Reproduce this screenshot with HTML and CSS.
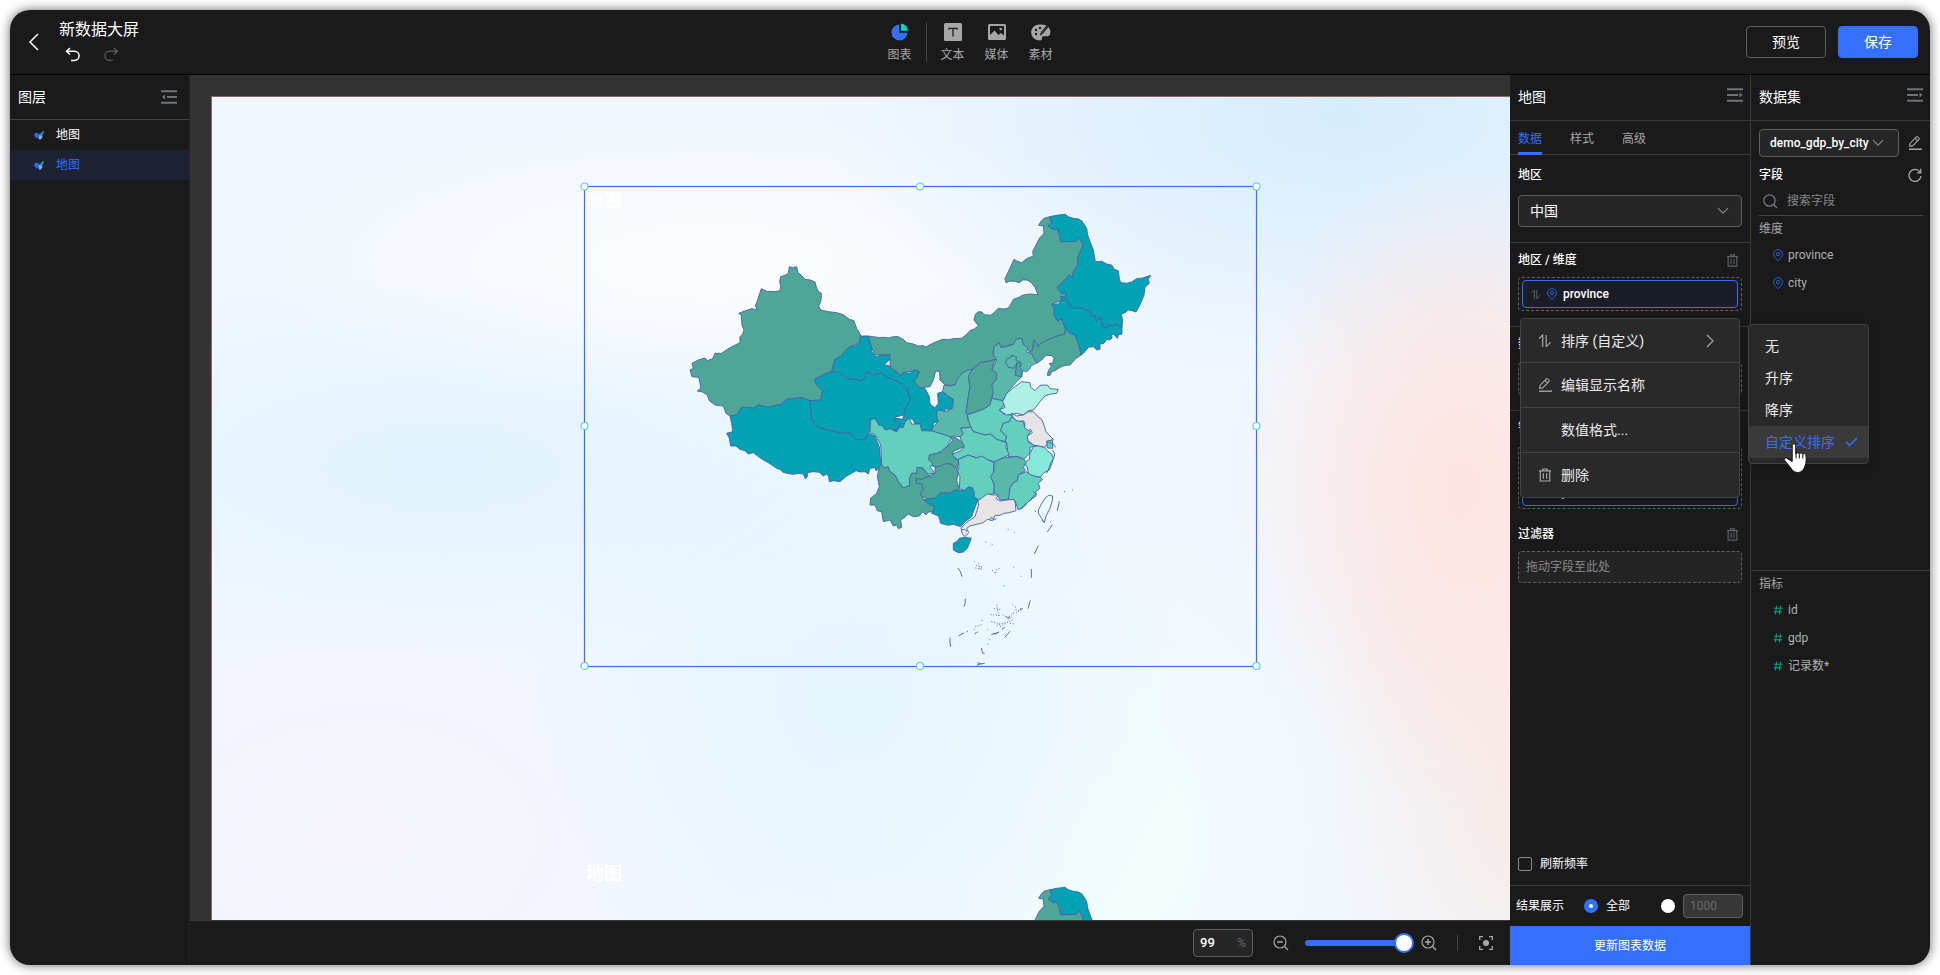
FILE: index.html
```html
<!DOCTYPE html>
<html lang="zh-CN">
<head>
<meta charset="utf-8">
<title>新数据大屏</title>
<link rel="stylesheet" href="styles.css">
</head>
<body>
<svg width="0" height="0" class="defs" aria-hidden="true">
  <defs>
    <symbol id="i-trash" viewBox="0 0 14 14"><path d="M1 2.8h12M4.8 2.5V1h4.4v1.5M2.3 3v10h9.4V3M5.4 5.2v5.5M8.6 5.2v5.5" fill="none" stroke="currentColor" stroke-width="1.2"/></symbol>
    <symbol id="i-pencil" viewBox="0 0 14 14"><path d="M1 13.2h13" fill="none" stroke="currentColor" stroke-width="1.4"/><path d="M1.6 10.4l.5-3L8.300.900a.9.9 0 0 1 1.200 0l1.500 1.300a.9.9 0 0 1 0 1.200L4.700 9.900z M7 2.500l2.400 2.200" fill="none" stroke="currentColor" stroke-width="1.1"/></symbol>
    <symbol id="i-pin" viewBox="0 0 12 14"><path d="M6 12.600C3 9.700 1.200 7.700 1.200 5.500a4.800 4.800 0 0 1 9.600 0c0 2.200-1.800 4.200-4.800 7.100z" fill="none" stroke="#2f62d9" stroke-width="1"/><circle cx="6" cy="5.500" r="1.800" fill="none" stroke="#2f62d9"/></symbol>
    <symbol id="i-sort" viewBox="0 0 14 14"><path d="M1.200 4.500L4.700 1v12M8.200 1v12M8.200 12.800l4-4.200v-.600" fill="none" stroke="currentColor" stroke-width="1.200"/></symbol>
    <symbol id="i-hash" viewBox="0 0 10 10"><path d="M3.600.500L2.400 9.500M7.600.500L6.400 9.500M1 3.200h8.500M.500 6.800H9" fill="none" stroke="#0ba586" stroke-width="1"/></symbol>
    <symbol id="i-down" viewBox="0 0 12 8"><path d="M1 1.200l5 5 5-5" fill="none" stroke="currentColor" stroke-width="1.100"/></symbol>
    <symbol id="i-fold" viewBox="0 0 16 14"><path d="M0 1.200h16M6 7h10M0 12.800h16" stroke="currentColor" stroke-width="2"/><path d="M1 7l3-2.500v5z" fill="currentColor"/></symbol>
    <symbol id="i-unfold" viewBox="0 0 16 14"><path d="M0 1.200h16M0 7h11M0 12.800h16" stroke="currentColor" stroke-width="2"/><path d="M15.500 7l-3-2.500v5z" fill="currentColor"/></symbol>
    <symbol id="i-map" viewBox="0 0 10 9"><path d="M0 3l2-1.500 3 1 1 2-1 3H3L.500 5.500z" fill="#2f62e8"/><path d="M5 4h3l.500 2L7 8.500H5z" fill="#8ba9f5"/><path d="M6 3l3-3 1 .500L8.500 4 6.500 5z" fill="#12a598"/></symbol>
    <g id="china" stroke="#4964a5" stroke-width="2.800" stroke-linejoin="round">
      <g>
        <path class="c-green" d="M565 408L585 411 598 413 612 412 625 414 640 410 655 410 664 415 672 420 680 428 700 432 715 438 730 437 738 441 750 434 765 427 788 418 805 419 820 416 845 415 858 405 870 392 883 387 895 377 882 360 886 343 895 335 906 336 912 344 932 346 942 338 955 325 970 327 982 325 990 318 1000 298 1017 292 1024 287 1035 284 1050 282 1074 284 1065 262 1052 246 1040 240 1028 240 1018 248 1005 244 990 243 978 248 975 236 985 215 1002 178 1010 183 1025 188 1040 176 1060 168 1058 155 1068 135 1078 115 1092 100 1090 78 1076 76 1083 64 1092 55 1110 50 1115 68 1104 78 1118 88 1132 86 1142 125 1188 124 1198 114 1210 135 1194 170 1194 195 1180 215 1177 232 1168 225 1131 262 1155 280 1158 292 1144 302 1115 312 1122 320 1124 350 1132 362 1145 357 1156 385 1155 402 1105 418 1082 430 1075 440 1062 420 1058 450 1050 458 1028 430 1025 415 1008 420 1005 432 960 442 958 430 942 440 938 460 950 480 902 487 875 508 865 510 845 530 825 555 805 556 792 552 780 540 779 515 767 513 760 540 750 560 715 564 702 545 718 515 700 514 680 515 665 527 630 500 630 465 585 465 572 440z"/>
        <path class="c-green" d="M328 200L338 203 350 200 354 218 364 226 375 238 390 240 405 246 410 265 416 275 424 280 424 292 422 305 416 318 422 330 445 335 470 338 490 344 508 358 522 362 526 374 530 385 542 405 538 430 510 440 485 468 465 478 455 515 430 524 404 537 410 555 428 572 422 600 390 602 365 593 320 598 305 612 265 622 235 615 220 624 185 622 170 645 150 648 138 640 130 618 105 615 88 602 82 585 68 576 52 573 62 565 60 550 56 532 36 530 30 510 40 505 36 490 55 480 75 474 82 482 98 476 105 460 125 460 140 449 160 438 180 428 180 410 188 402 192 390 186 375 184 345 176 340 195 333 215 326 232 330 226 318 233 300 244 266 260 274 285 275 300 272 302 260 299 245 302 230 315 226 325 220z"/>
        <path class="c-teal" d="M150 648L170 645 185 622 220 624 235 615 265 622 305 612 320 598 365 593 390 602 394 650 402 670 415 682 440 688 475 698 510 698 528 718 555 718 565 700 585 708 598 740 603 795 597 806 588 812 585 803 570 805 565 822 555 815 540 816 528 812 515 820 500 828 480 845 462 842 448 845 446 830 440 822 430 828 418 817 400 815 382 818 382 830 376 836 370 822 355 820 340 823 320 820 308 816 300 808 290 805 275 795 265 788 250 780 238 772 220 758 205 762 195 752 180 748 168 738 152 738 148 715 140 700 158 695 155 670z"/>
        <path class="c-teal" d="M404 537L420 530 430 524 455 515 470 518 482 517 490 525 500 535 512 537 528 537 545 542 556 530 558 516 578 524 600 518 630 535 665 550 680 565 692 600 678 622 670 645 645 652 650 668 668 680 652 698 625 692 610 688 598 675 588 660 570 660 568 695 555 718 528 718 510 698 475 698 440 688 415 682 402 670 394 650 390 602 422 600 428 572 410 555z"/>
        <path class="c-teal" d="M542 408L565 408 568 425 576 442 574 454 587 470 605 466 628 464 628 480 612 495 625 496 640 508 652 520 665 527 670 516 690 520 705 508 718 515 712 530 702 545 720 564 735 565 748 590 750 612 765 624 775 610 773 580 788 575 800 587 820 598 815 628 800 627 790 633 772 630 770 648 778 655 775 665 762 668 755 693 740 690 725 693 720 672 705 672 700 660 688 655 675 665 680 678 672 680 652 698 640 690 652 685 662 672 645 665 642 654 668 658 678 622 692 600 680 565 665 550 630 535 600 518 578 524 558 516 556 530 545 542 500 535 490 525 470 515 455 515 465 478 485 468 493 455 510 440 525 438 538 430z"/>
      </g>
      <g transform="translate(720 0)">
        <path class="c-green" d="M338 450L342 420 355 440 362 430 385 418 400 413 412 408 435 402 436 385 448 398 465 405 475 430 484 465 468 475 450 495 435 496 420 502 405 512 395 515 390 526 382 526 385 512 394 500 388 490 398 490 402 475 395 467 378 466 365 480 350 490 340 478 330 458z"/>
        <path class="c-teal" d="M395 312L415 312 424 302 440 298 450 318 462 324 480 322 500 330 510 334 515 350 525 346 530 362 542 352 550 382 562 384 565 374 580 378 592 372 606 385 606 402 596 404 592 415 583 404 575 402 576 414 570 420 560 418 552 430 540 432 540 448 530 450 520 440 505 442 495 455 484 465 475 430 465 405 448 398 436 385 430 370 425 357 412 362 402 345 404 325z"/>
        <path class="c-teal" d="M390 50L410 46 435 43 445 50 460 55 475 57 485 62 492 72 500 85 503 105 512 130 520 150 526 185 545 184 560 192 575 195 583 208 595 212 598 236 602 248 620 250 635 246 650 236 668 234 692 226 685 238 688 250 675 262 672 285 662 310 656 322 648 336 635 332 625 330 615 338 604 343 608 360 606 385 592 372 580 378 565 374 562 384 550 382 542 352 530 362 525 346 515 350 510 334 500 330 480 322 462 324 450 318 440 298 424 300 422 288 438 292 436 276 425 282 411 262 430 245 448 225 457 232 460 215 474 195 474 170 490 135 478 114 468 124 422 125 420 105 412 86 398 88 384 78 395 68z"/>
      </g>
      <g transform="translate(480 390)">
        <path class="c-foam" d="M462 50L478 38 482 52 500 50 520 43 528 28 545 25 550 45 563 52 560 66 575 72 590 98 575 106 568 118 560 125 548 122 545 140 525 160 500 190 488 212 455 205 455 165 470 145 455 120 470 90 460 75z"/>
        <path class="c-foam" d="M500 85L512 84 515 75 530 82 527 90 540 95 535 108 525 106 522 115 505 112 497 98z"/>
        <path class="c-green" d="M530 98L545 100 540 112 547 122 545 140 525 136 528 118z"/>
        <path class="c-foam" d="M385 120L397 117 385 140 390 170 385 200 378 245 382 255 382 270 395 285 392 292 362 295 370 302 382 304 370 312 360 320 340 318 335 322 300 310 275 303 280 290 295 275 290 258 292 240 318 244 338 235 340 208 308 185 312 165 330 168 345 165 352 148 365 130z"/>
        <path class="c-green" d="M397 117L410 110 420 98 440 95 465 88 455 120 470 128 470 145 455 165 460 185 455 205 450 225 430 238 410 245 380 253 378 245 385 200 390 170 385 140z"/>
        <path class="c-light" d="M382 255L410 245 430 238 450 225 455 205 488 212 495 225 478 238 490 252 515 255 520 262 508 275 490 280 488 295 480 302 500 320 495 335 470 328 455 312 435 315 400 305 390 285z"/>
        <path class="c-pale" d="M488 215L500 190 522 172 545 155 570 158 572 172 585 182 600 166 622 165 630 176 655 178 650 190 632 192 615 198 600 215 590 228 580 240 565 242 550 255 530 250 500 255 478 240 495 232z"/>
        <path class="c-grey" d="M515 250L530 258 550 255 563 246 580 245 592 258 605 268 612 285 618 305 630 318 640 328 625 335 615 352 595 348 580 345 562 330 562 318 577 308 572 298 560 305 553 295 555 280 550 272 535 276 520 265z"/>
        <path class="c-light" d="M490 280L508 275 515 260 530 272 550 275 555 295 572 305 562 318 564 335 585 348 570 352 570 370 552 388 535 380 505 380 500 338 495 335 500 320 482 300z"/>
        <path class="c-light" d="M620 333L638 330 638 355 622 354z"/>
        <path class="c-light2" d="M580 350L595 348 612 352 622 362 635 372 640 385 636 400 628 420 612 428 600 442 582 440 565 430 562 412 553 398 568 388 570 370z"/>
        <path class="c-light" d="M345 370L365 360 373 350 365 335 360 320 370 312 362 295 392 292 400 305 435 315 450 312 470 328 500 338 498 352 508 375 490 382 465 395 445 390 425 380 410 384 385 375 360 385 355 390 340 380 337 368z"/>
        <path class="c-light" d="M355 388L370 382 385 375 410 384 425 378 445 390 462 398 460 430 452 440 463 465 462 492 440 495 432 508 415 508 402 500 404 485 396 472 385 475 375 482 358 475 360 440 352 425 357 410z"/>
        <path class="c-foam" d="M463 395L490 384 510 382 530 380 553 388 558 400 550 412 556 422 535 435 532 452 518 460 510 475 510 492 502 510 480 510 470 492 462 488 463 465 452 440 462 425z"/>
        <path class="c-light" d="M558 425L575 436 600 442 608 448 595 460 600 475 588 485 588 498 565 515 550 532 535 540 525 512 505 508 510 475 518 460 532 452 535 435z"/>
        <path class="c-light" d="M92 270L105 265 116 285 128 288 135 300 150 296 170 306 178 292 190 292 195 275 208 265 215 282 240 282 245 302 275 303 300 310 335 322 325 345 305 362 292 370 268 375 268 390 280 402 270 410 285 430 262 432 250 415 232 412 230 430 215 430 208 448 210 466 190 474 175 455 165 435 150 425 144 410 135 415 125 405 122 345 112 325 102 312 90 308z"/>
        <path class="c-green" d="M330 320L345 322 365 335 373 350 345 362 335 368 342 382 355 390 352 415 340 408 330 400 310 408 290 412 275 408 280 402 266 390 268 375 292 370 305 366 318 352 328 345 338 330z"/>
        <path class="c-green" d="M285 412L300 408 320 400 335 404 350 415 355 430 350 450 358 478 345 480 330 490 302 488 298 500 285 505 262 506 245 500 240 490 250 478 245 462 230 460 228 445 245 448 262 440 275 434 285 430z"/>
        <path class="c-green" d="M118 410L125 405 135 415 144 410 150 425 165 435 175 455 190 474 210 466 208 448 215 430 230 430 232 412 250 415 262 432 270 438 262 440 245 448 228 445 230 460 245 462 250 478 240 490 250 508 265 525 272 525 285 530 280 545 265 546 258 555 248 545 238 558 220 560 205 552 195 562 182 570 185 592 175 596 170 585 160 588 150 570 130 575 125 545 112 542 105 525 90 525 92 505 110 490 118 470 112 440z"/>
        <path class="c-teal" d="M250 508L285 505 300 490 330 490 345 480 375 482 385 470 398 475 402 500 414 510 402 540 395 560 375 575 362 590 340 583 325 586 302 580 296 558 275 550 285 530 262 520z"/>
      </g>
      <g transform="translate(660 840)">
        <path class="c-grey" d="M234 62L262 42 280 45 295 45 288 56 300 63 320 60 342 58 346 70 348 92 328 98 312 100 300 106 285 106 278 122 262 118 250 128 210 138 200 145 206 158 195 170 187 162 183 145 196 130 225 110 236 75z"/>
        <path class="c-teal" d="M160 190L172 184 178 175 195 172 214 175 208 190 202 205 190 216 175 218 160 210z"/>
        <path fill="none" d="M415 90L425 70 437 53 446 46 458 48 457 62 450 85 438 108 433 128 427 118 416 102z"/>
        <path fill="none" d="M400 34L407 42 392 58 382 68 370 78 360 88M268 118l8-6 6 8 8-4M425 120l10 8M183 150l10-2 8 6M458 -90l6 10-2 14-8 12-6 16-8 18M440 -110l8-4 14 8 4 8M404 92l4 4"/>
        <path fill="none" d="M478 64L472 92M457 134L442 156M415 197L403 222M394 267V294M391 361L384 386M330 454L314 473M174 264Q182 272 186 290M196 356Q197 370 192 380M150 473Q149 486 152 500"/>
        <path fill="none" stroke-dasharray="3 5" d="M222 244l5 4M228 256l22 6M226 264l24 4M236 250l5 22M276 270l10 10 4-12 12-4M324 148l3 5M342 156l4 4M256 186l4 2M275 193l4 2M340 261l3 2M362 288l5 3M310 317l4 1M282 386l20 2M290 374l6 34M272 404l28 2M308 404l14 10 18-14M318 410l16 2-12 8M346 380l4 18 18-10M355 392l12-10M338 374l4 4M226 440l20-6M222 446l5 6M246 420l2 4M274 424l26 8M290 436l26-8M300 440l14-8 28-14M330 430l12 2M262 448l5 4M226 462l10-8M492 34l6 1M516 30l4 1M450 124l4 2"/>
        <path fill="none" d="M176 468l16-10M184 464l4-4M200 456l4-3M274 464l24-8M280 460l12 2M224 462l6-6M306 448l8-6M244 504l4 16 6 0M230 556l10-4 14-2M232 548l12 4M268 478l3 2M262 492l3 1M338 400l4-2M360 388l8-2M322 412l6 2"/>
      </g>
    </g>
  </defs>
</svg>

<div class="window">
  <header class="topbar">
    <svg class="back" width="12" height="18" viewBox="0 0 12 18"><path d="M10 1L2 9l8 8" fill="none" stroke="#fff" stroke-width="1.500"/></svg>
    <div class="doc">
      <div class="doc-title">新数据大屏</div>
      <div class="history">
        <svg width="16" height="15" viewBox="0 0 16 15"><path d="M5 1L1.500 4.200 5 7.500M1.500 4.200h8a4.600 4.600 0 0 1 0 9.200H6" fill="none" stroke="#fff" stroke-width="1.500"/></svg>
        <svg width="16" height="15" viewBox="0 0 16 15"><path d="M11 1l3.500 3.200L11 7.500M14.500 4.200h-8a4.600 4.600 0 0 0 0 9.200H10" fill="none" stroke="#5a5a5a" stroke-width="1.300"/></svg>
      </div>
    </div>
    <nav class="tools">
      <div class="tool"><svg width="18" height="18" viewBox="0 0 18 18"><path d="M8.300 1.500a8 8 0 1 0 8.200 8.300H8.300z" fill="#3370ff"/><path d="M10 .500a7.500 7.500 0 0 1 7 7.300h-7z" fill="#00d6b9"/></svg><span>图表</span></div>
      <i class="tool-sep"></i>
      <div class="tool"><svg width="18" height="18" viewBox="0 0 18 18"><rect width="18" height="18" rx="1.500" fill="#a6a6a6"/><path d="M5 5.300h8M9 5v8.500M5 4.700v2M13 4.700v2" stroke="#1a1a1a" stroke-width="1.300"/></svg><span>文本</span></div>
      <div class="tool"><svg width="18" height="18" viewBox="0 0 18 18"><rect y="1" width="18" height="16" rx="1.500" fill="#a6a6a6"/><path d="M2 3h14v9.500l-3-2.500-2.500 2-4-4.500L2 12z" fill="#1a1a1a"/><circle cx="12.700" cy="6" r="1.300" fill="#a6a6a6"/></svg><span>媒体</span></div>
      <div class="tool"><svg width="20" height="18" viewBox="0 0 20 18"><path d="M8.500 1.500C4 1.500.200 5 .200 9.500c0 4 3.300 8 9 8 2.500 0 1-3 2.500-4 1.800-1 5 1 7-1.500 1.300-3 .800-5.500-1.200-8L12 10.500 9 13l1-4 5.500-6.500c-2-.800-4.500-1-7-1z" fill="#a6a6a6"/><path d="M19.500.500L11.500 10l-1.800 1.200.8-2z" fill="#a6a6a6" stroke="#1a1a1a" stroke-width=".8"/><circle cx="9" cy="5" r="1.200" fill="#1a1a1a"/><circle cx="5" cy="7" r="1.200" fill="#1a1a1a"/><circle cx="5" cy="11" r="1.200" fill="#1a1a1a"/></svg><span>素材</span></div>
    </nav>
    <div class="actions"><button class="btn">预览</button><button class="btn primary">保存</button></div>
  </header>

  <div class="body">
    <aside class="layers">
      <div class="layers-head"><span>图层</span><svg class="fold" width="16" height="14"><use href="#i-fold"/></svg></div>
      <div class="layer"><svg width="10" height="9"><use href="#i-map"/></svg>地图</div>
      <div class="layer active"><svg width="10" height="9"><use href="#i-map"/></svg>地图</div>
    </aside>

    <main class="center">
      <div class="viewport">
        <div class="stage">
          <svg class="maps" width="1298" height="823" viewBox="212 97 1298 823">
            <use href="#china" transform="translate(680 200) scale(.33333)"/>
            <use href="#china" transform="translate(680 873) scale(.33333)"/>
          </svg>
          <div class="chart chart-a">地图</div>
          <div class="chart chart-b">地图</div>
          <svg class="selection" width="684" height="492" viewBox="-6 -6 684 492">
            <rect x=".5" y=".5" width="672" height="480" fill="none" stroke="#3370ff" stroke-width="1.200"/>
            <g fill="#fff" stroke="#59c7f9" stroke-width="1.100"><circle cx=".5" cy=".5" r="3.500"/><circle cx="336" cy=".5" r="3.500"/><circle cx="672.500" cy=".5" r="3.500"/><circle cx=".5" cy="240" r="3.500"/><circle cx="672.500" cy="240" r="3.500"/><circle cx=".5" cy="480" r="3.500"/><circle cx="336" cy="480" r="3.500"/><circle cx="672.500" cy="480" r="3.500"/></g>
          </svg>
        </div>
      </div>
      <footer class="zoombar">
        <div class="zoom-input"><b>99</b><span>%</span></div>
        <svg class="z-out" width="16" height="16" viewBox="0 0 16 16"><circle cx="7" cy="7" r="6" fill="none" stroke="#a6a6a6" stroke-width="1.200"/><path d="M4 7h6M11.300 11.300L15 15" stroke="#a6a6a6" stroke-width="1.400"/></svg>
        <div class="slider"><i></i></div>
        <svg class="z-in" width="16" height="16" viewBox="0 0 16 16"><circle cx="7" cy="7" r="6" fill="none" stroke="#a6a6a6" stroke-width="1.200"/><path d="M4 7h6M7 4v6M11.300 11.300L15 15" stroke="#a6a6a6" stroke-width="1.400"/></svg>
        <i class="z-sep"></i>
        <svg width="14" height="14" viewBox="0 0 14 14"><path d="M.700 4V.700H4M10 .700h3.300V4M13.300 10v3.300H10M4 13.300H.700V10" fill="none" stroke="#a6a6a6" stroke-width="1.300"/><circle cx="7" cy="7" r="3" fill="#a6a6a6"/></svg>
      </footer>
    </main>

    <aside class="props">
      <div class="panel-head"><span>地图</span><svg class="fold" width="16" height="14"><use href="#i-unfold"/></svg></div>
      <div class="tabs"><span class="on">数据</span><span>样式</span><span>高级</span></div>
      <section class="sec sec-area">
        <div class="label">地区</div>
        <div class="select"><span>中国</span><svg width="12" height="8"><use href="#i-down"/></svg></div>
      </section>
      <section class="sec">
        <div class="label">地区 / 维度<svg width="13" height="13"><use href="#i-trash"/></svg></div>
        <div class="drop"><div class="chip"><svg class="dim" width="10" height="11"><use href="#i-sort"/></svg><svg width="12" height="13"><use href="#i-pin"/></svg>province</div></div>
      </section>
      <section class="sec">
        <div class="label">数据 / 指标</div>
        <div class="drop hint">拖动字段至此处</div>
      </section>
      <section class="sec last">
        <div class="label">钻取 / 维度</div>
        <div class="drop two"><div class="chip"><svg width="12" height="13"><use href="#i-pin"/></svg>province</div><div class="chip city"><svg width="12" height="13"><use href="#i-pin"/></svg>city</div></div>
        <div class="label filter">过滤器<svg width="13" height="13"><use href="#i-trash"/></svg></div>
        <div class="drop hint">拖动字段至此处</div>
      </section>
      <div class="refresh"><i class="box"></i>刷新频率</div>
      <div class="result"><span>结果展示</span><i class="radio on"></i><span>全部</span><i class="radio"></i><div class="num">1000</div></div>
      <button class="update">更新图表数据</button>

      <div class="menu">
        <div class="mi"><svg width="14" height="14"><use href="#i-sort"/></svg><span>排序 (自定义)</span><svg class="go" width="8" height="14" viewBox="0 0 8 14"><path d="M1 1l6 6-6 6" fill="none" stroke="#a6a6a6" stroke-width="1.200"/></svg></div>
        <div class="mi"><svg width="14" height="14"><use href="#i-pencil"/></svg><span>编辑显示名称</span></div>
        <div class="mi"><i class="gap"></i><span>数值格式...</span></div>
        <div class="mi"><svg width="14" height="14"><use href="#i-trash"/></svg><span>删除</span></div>
      </div>
      <div class="submenu">
        <div>无</div><div>升序</div><div>降序</div>
        <div class="sel">自定义排序<svg width="13" height="10" viewBox="0 0 13 10"><path d="M1 4.800L4.500 8.500 12 1" fill="none" stroke="#3370ff" stroke-width="1.500"/></svg></div>
        <svg class="cursor" width="26" height="32" viewBox="0 0 26 32"><path d="M9.200 3.200a1.800 1.800 0 0 1 3.500 0v8.600l.3.400a1.600 1.600 0 0 1 3.300.2 1.700 1.700 0 0 1 3.400.5 1.600 1.600 0 0 1 3.300.6c.3 3.500.4 7.500-1 10.500-1.500 4-3.500 6.500-7.500 6.500-3.500 0-5.300-2.300-7-5l-5.800-7c-1.200-1.700.3-3 2-2.300l5.500 3.300z" fill="#fff" stroke="#111" stroke-width="1"/><path d="M13.100 12v4.500M16.400 12.500v4M19.800 13v3.500" stroke="#111" stroke-width="1"/></svg>
      </div>
    </aside>

    <aside class="dataset">
      <div class="panel-head"><span>数据集</span><svg class="fold" width="16" height="14"><use href="#i-unfold"/></svg></div>
      <div class="ds-row"><div class="ds-select"><span>demo_gdp_by_city</span><svg width="12" height="8"><use href="#i-down"/></svg></div><svg class="ico" width="14" height="14"><use href="#i-pencil"/></svg></div>
      <div class="ds-fields">字段<svg width="14" height="14" viewBox="0 0 14 14"><path d="M12.300 4.500A6 6 0 1 0 13 8M12.800.800v4H9" fill="none" stroke="#a6a6a6" stroke-width="1.300"/></svg></div>
      <div class="search"><svg width="15" height="15" viewBox="0 0 15 15"><circle cx="6.500" cy="6.500" r="5.700" fill="none" stroke="#777b82" stroke-width="1.200"/><path d="M10.800 10.800L14 14" stroke="#777b82" stroke-width="1.300"/></svg>搜索字段</div>
      <div class="dims">
        <div class="group">维度</div>
        <div class="field"><svg width="12" height="13"><use href="#i-pin"/></svg>province</div>
        <div class="field"><svg width="12" height="13"><use href="#i-pin"/></svg>city</div>
      </div>
      <div class="group">指标</div>
      <div class="field"><svg width="12" height="10"><use href="#i-hash"/></svg>id</div>
      <div class="field"><svg width="12" height="10"><use href="#i-hash"/></svg>gdp</div>
      <div class="field"><svg width="12" height="10"><use href="#i-hash"/></svg>记录数*</div>
    </aside>
  </div>
</div>
</body>
</html>
```

FILE: styles.css
```css
* { box-sizing: border-box; }
body {
  margin: 0;
  padding: 10px;
  height: 975px;
  overflow: hidden;
  background: #fff;
  font: 12px/18px Roboto, "Noto Sans CJK SC", sans-serif;
  color: #fff;
}
svg { display: block; flex: none; }
i { display: block; flex: none; }
button { font: inherit; color: inherit; padding: 0; }
.defs { position: absolute; }

.window {
  width: 1920px;
  height: 955px;
  border-radius: 20px;
  overflow: hidden;
  background: #1a1a1a;
  box-shadow: 0 0 11px rgba(0, 0, 0, .6);
  display: flex;
  flex-direction: column;
}

/* top bar */
.topbar {
  height: 65px;
  flex: none;
  display: grid;
  grid-template-columns: 1fr auto 1fr;
  grid-template-rows: 64px;
  border-bottom: 1px solid #000;
  position: relative;
}
.back { position: absolute; left: 18px; top: 23px; }
.doc { padding: 9px 0 0 49px; }
.doc-title { font-size: 16px; line-height: 22px; }
.history { display: flex; gap: 22px; padding: 6px 0 0 6px; }
.tools { display: flex; padding-top: 13px; }
.tool {
  width: 44px;
  display: flex;
  flex-direction: column;
  align-items: center;
  gap: 5px;
  color: #a6a6a6;
}
.tool-sep { width: 1px; height: 40px; margin: -1px 4px 0; background: #434343; }
.actions { display: flex; justify-content: flex-end; gap: 12px; padding: 16px 12px 0 0; }
.btn {
  width: 80px;
  height: 32px;
  border: 1px solid #5f5f5f;
  border-radius: 4px;
  background: transparent;
  font-size: 14px;
}
.btn.primary { background: #3370ff; border-color: #3370ff; }

.body { flex: 1; display: flex; min-height: 0; }

/* layer list */
.layers { width: 180px; border-right: 1px solid #242424; }
.layers-head {
  height: 45px;
  display: flex;
  align-items: center;
  justify-content: space-between;
  padding: 0 12px 0 8px;
  border-bottom: 1px solid #434343;
  font-size: 14px;
}
.fold { color: #6d727b; }
.layer { height: 30px; display: flex; align-items: center; gap: 12px; padding-left: 24px; }
.layer.active { background: #1c2233; color: #3370ff; }

/* canvas */
.center { width: 1320px; display: flex; flex-direction: column; }
.viewport { flex: 1; padding: 21px 0 0 21px; background: #333; overflow: hidden; }
.stage {
  position: relative;
  width: 1299px;
  height: 824px;
  border: solid #8c6565;
  border-width: 1px 0 0 1px;
  overflow: hidden;
  background:
    radial-gradient(ellipse 230px 330px at 1250px 390px, rgba(255, 226, 222, .95), rgba(255, 228, 224, .55) 55%, rgba(255, 230, 226, 0)),
    radial-gradient(ellipse 230px 330px at 1330px 680px, rgba(249, 234, 228, 1), rgba(249, 238, 234, 0)),
    radial-gradient(ellipse 520px 260px at 1130px 20px, rgba(212, 236, 253, .95), rgba(214, 237, 253, 0)),
    radial-gradient(ellipse 480px 150px at 500px 165px, rgba(252, 253, 255, 1), rgba(252, 253, 255, 0)),
    radial-gradient(ellipse 500px 190px at 230px 370px, rgba(224, 243, 255, .95), rgba(226, 244, 255, 0)),
    radial-gradient(ellipse 330px 340px at 640px 600px, rgba(228, 245, 255, 1), rgba(228, 245, 255, 0)),
    radial-gradient(ellipse 420px 280px at 150px 740px, rgba(246, 245, 254, 1), rgba(246, 245, 254, 0)),
    radial-gradient(ellipse 300px 380px at 900px 740px, rgba(243, 253, 255, 1), rgba(243, 253, 255, 0)),
    #f1f7ff;
}
.maps { position: absolute; left: 0; top: 0; }
.chart {
  position: absolute;
  left: 374px;
  font-size: 18px;
  line-height: 26px;
  font-weight: 700;
  color: #fff;
}
.chart-a { top: 91px; }
.chart-b { top: 764px; }
.selection { position: absolute; left: 366px; top: 83px; }
.c-green { fill: #4da698; }
.c-teal { fill: #00a2b3; }
.c-foam { fill: #59baac; }
.c-light { fill: #63d0be; }
.c-light2 { fill: #86e8d8; }
.c-pale { fill: #aff0e5; }
.c-grey { fill: #e6e4e4; }

.zoombar {
  height: 45px;
  flex: none;
  display: flex;
  align-items: center;
  justify-content: flex-end;
  padding: 0 17px 0 0;
  border-top: 1px solid #3a3a3a;
}
.zoom-input {
  width: 60px;
  height: 28px;
  display: flex;
  align-items: center;
  justify-content: space-between;
  padding: 0 6px;
  border: 1px solid #5f5f5f;
  border-radius: 4px;
  background: #262626;
}
.zoom-input b { font-weight: 500; font-size: 13px; }
.zoom-input span { color: #5f6670; }
.z-out { margin-left: 20px; }
.slider { width: 99px; height: 6px; margin: 0 17px 0 16px; border-radius: 3px; background: #3370ff; position: relative; }
.slider i {
  position: absolute;
  right: -10px;
  top: -7px;
  width: 20px;
  height: 20px;
  border: 2px solid #3370ff;
  border-radius: 50%;
  background: #fff;
}
.z-sep { width: 1px; height: 16px; margin: 0 21px 0 20px; background: #434343; }

/* property panel */
.props { width: 241px; display: flex; flex-direction: column; border-right: 1px solid #393939; position: relative; }
.panel-head {
  height: 46px;
  flex: none;
  display: flex;
  align-items: center;
  justify-content: space-between;
  padding: 0 7px 2px 8px;
  border-bottom: 1px solid #393939;
  font-size: 14px;
}
.panel-head .fold { margin-top: -3px; }
.tabs {
  height: 34px;
  flex: none;
  display: flex;
  gap: 28px;
  padding: 9px 0 0 8px;
  border-bottom: 1px solid #393939;
  color: #a6a6a6;
}
.tabs .on { height: 25px; color: #3370ff; border-bottom: 3px solid #3370ff; }
.sec { padding: 8px 8px 15px; border-bottom: 1px solid #393939; }
.sec-area { padding-top: 11px; }
.sec.last { border: 0; padding-bottom: 0; }
.label { height: 18px; display: flex; align-items: center; justify-content: space-between; padding-right: 3px; font-weight: 500; color: #fff; }
.label svg { color: #5f6369; }
.select {
  height: 32px;
  margin-top: 11px;
  display: flex;
  align-items: center;
  justify-content: space-between;
  padding: 0 12px 0 11px;
  border: 1px solid #5f5f5f;
  border-radius: 4px;
  background: #262626;
  font-size: 14px;
}
.select svg, .ds-select svg { color: #8a8a8a; }
.drop {
  height: 34px;
  margin-top: 8px;
  padding: 2px 3px;
  border: 1px dashed #5f5f5f;
  border-radius: 4px;
}
.sec + .sec + .sec .drop { height: 33px; margin-top: 9px; }
.drop.two { height: 63px !important; display: flex; flex-direction: column; justify-content: space-between; }
.chip {
  height: 28px;
  display: flex;
  align-items: center;
  gap: 5px;
  padding-left: 8px;
  border: 1px solid #3370ff;
  border-radius: 4px;
  background: #1a1d26;
  font-weight: 500;
}
.chip .dim { color: #6b6b6b; }
.drop.hint { padding: 6px 7px; background: #242424; color: #8a8a8a; }
.label.filter { margin-top: 16px; }
.sec.last .filter + .drop { height: 32px; margin-top: 8px; }
.refresh { display: flex; align-items: center; gap: 8px; margin-top: auto; padding: 0 8px 12px; }
.box { width: 14px; height: 14px; border: 1px solid #8a8a8a; border-radius: 2px; }
.result { height: 41px; flex: none; display: flex; align-items: center; padding: 0 6px; border-top: 1px solid #393939; }
.radio { width: 14px; height: 14px; border-radius: 50%; background: #fff; margin: 0 8px 0 31px; }
.radio.on { border: 5px solid #3370ff; margin: 0 8px 0 20px; }
.num { width: 60px; height: 24px; padding: 2px 6px; border: 1px solid #5f5f5f; border-radius: 4px; background: #373737; color: #6a6a6a; }
.update { height: 39px; flex: none; border: 0; background: #3370ff; }

/* pop-up menus */
.menu, .submenu {
  position: absolute;
  border: 1px solid #434343;
  border-radius: 4px;
  background: #292929;
  font-size: 14px;
  color: #ebebeb;
  box-shadow: 0 4px 10px rgba(0, 0, 0, .25);
  z-index: 2;
}
.menu { left: 10px; top: 243px; width: 220px; }
.mi { height: 45px; display: flex; align-items: center; gap: 9px; padding-left: 17px; border-bottom: 1px solid #434343; }
.mi:first-child { height: 44px; }
.mi:last-child { height: 44px; border: 0; }
.mi > svg { color: #a6a6a6; }
.gap { width: 14px; }
.go { margin: 0 25px 0 auto; }
.submenu { left: 238px; top: 249px; width: 121px; padding: 5px 0; }
.submenu > div { height: 32px; line-height: 32px; padding-left: 16px; }
.submenu > .sel { display: flex; align-items: center; justify-content: space-between; padding-right: 10px; background: #3a3a3a; color: #3370ff; }
.cursor { position: absolute; left: 34px; top: 117px; }

/* dataset panel */
.dataset { width: 179px; }
.dataset .fold { color: #6d727b; }
.ds-row { display: flex; align-items: center; gap: 9px; padding: 8px 8px 0; }
.ds-select {
  width: 140px;
  height: 28px;
  display: flex;
  align-items: center;
  gap: 3px;
  padding-left: 10px;
  border: 1px solid #5f5f5f;
  border-radius: 4px;
  background: #262626;
  font-weight: 500;
}
.ds-row .ico { color: #a6a6a6; }
.ds-fields { display: flex; align-items: center; justify-content: space-between; padding: 9px 8px 0; font-weight: 500; }
.search {
  height: 32px;
  display: flex;
  align-items: center;
  gap: 9px;
  margin: 0 7px 0 8px;
  padding: 3px 0 0 4px;
  border-bottom: 1px solid #434343;
  color: #85888e;
}
.dims { height: 355px; border-bottom: 1px solid #393939; }
.group { padding: 4px 8px 0; color: #a6a6a6; }
.field { height: 28px; display: flex; align-items: center; gap: 4px; padding-left: 21px; color: #b0b0b0; position: relative; top: 3px; }
```
